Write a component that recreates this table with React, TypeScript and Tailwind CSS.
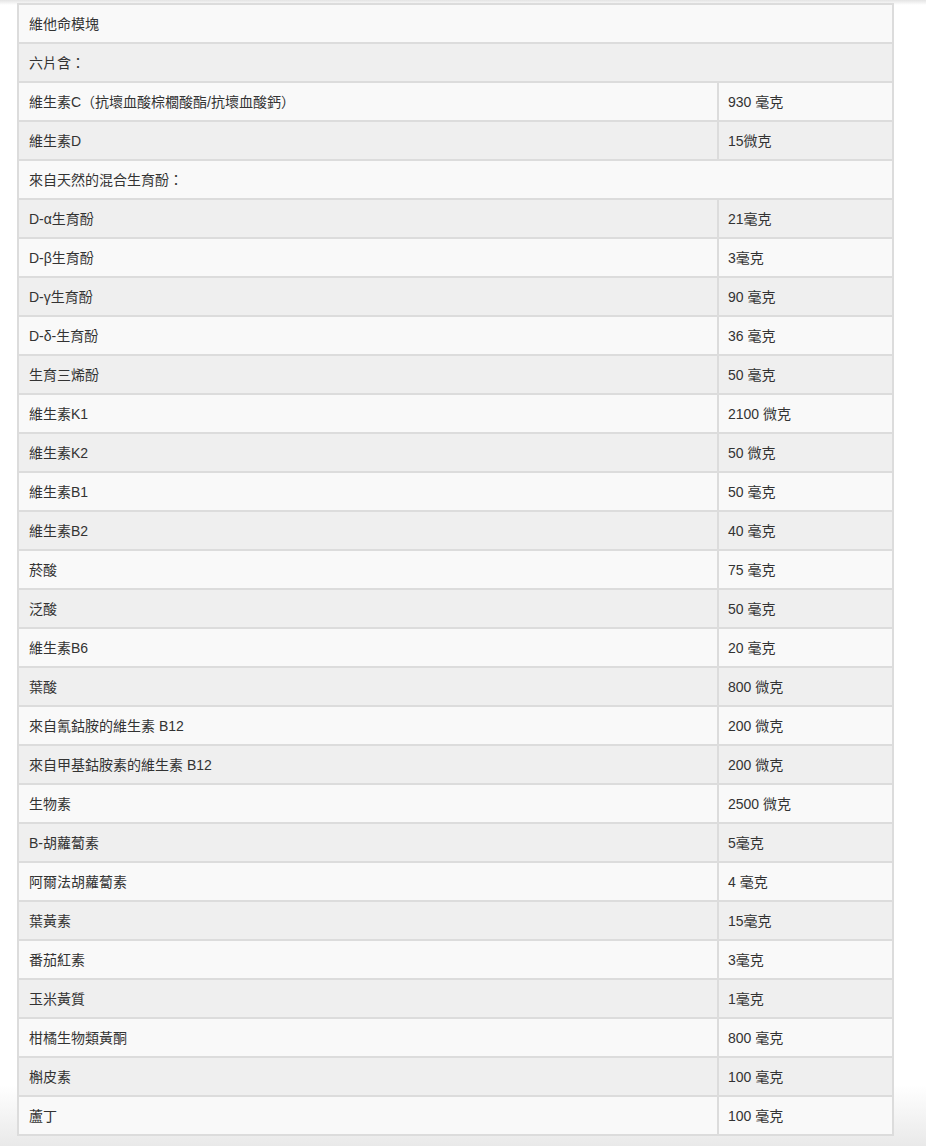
const rows: [string, string | null][] = [
  ["維他命模塊", null],
  ["六片含：", null],
  ["維生素C（抗壞血酸棕櫚酸酯/抗壞血酸鈣）", "930 毫克"],
  ["維生素D", "15微克"],
  ["來自天然的混合生育酚：", null],
  ["D-α生育酚", "21毫克"],
  ["D-β生育酚", "3毫克"],
  ["D-γ生育酚", "90 毫克"],
  ["D-δ-生育酚", "36 毫克"],
  ["生育三烯酚", "50 毫克"],
  ["維生素K1", "2100 微克"],
  ["維生素K2", "50 微克"],
  ["維生素B1", "50 毫克"],
  ["維生素B2", "40 毫克"],
  ["菸酸", "75 毫克"],
  ["泛酸", "50 毫克"],
  ["維生素B6", "20 毫克"],
  ["葉酸", "800 微克"],
  ["來自氰鈷胺的維生素 B12", "200 微克"],
  ["來自甲基鈷胺素的維生素 B12", "200 微克"],
  ["生物素", "2500 微克"],
  ["B-胡蘿蔔素", "5毫克"],
  ["阿爾法胡蘿蔔素", "4 毫克"],
  ["葉黃素", "15毫克"],
  ["番茄紅素", "3毫克"],
  ["玉米黃質", "1毫克"],
  ["柑橘生物類黃酮", "800 毫克"],
  ["槲皮素", "100 毫克"],
  ["蘆丁", "100 毫克"],
]

export default function App() {
  return (
    <div
      className="h-[1146px] w-full overflow-hidden pt-[3px] bg-[linear-gradient(to_bottom,#e4e4e4_0px,#ffffff_5px,#ffffff_1085px,#e9e9e9_1146px)] text-[14px] text-[#333]"
      style={{ fontFamily: '"Liberation Sans", "Noto Sans CJK TC", sans-serif' }}
    >
      <div className="ml-[17px] w-[877px] border-2 border-[#dcdcdc]">
        {rows.map(([name, amount], i) => (
          <div
            key={i}
            className={`flex h-[37px] ${i > 0 ? "box-content border-t-2 border-[#dcdcdc]" : ""} ${
              i % 2 === 0 ? "bg-[#f9f9f9]" : "bg-[#efefef]"
            }`}
          >
            <div className={`flex items-center pl-[10px] pt-[2px] ${amount === null ? "flex-1" : "w-[698px]"}`}>
              {name}
            </div>
            {amount !== null && (
              <div className="flex flex-1 items-center border-l-2 border-[#dcdcdc] pl-[9px] pt-[2px]">{amount}</div>
            )}
          </div>
        ))}
      </div>
    </div>
  )
}
